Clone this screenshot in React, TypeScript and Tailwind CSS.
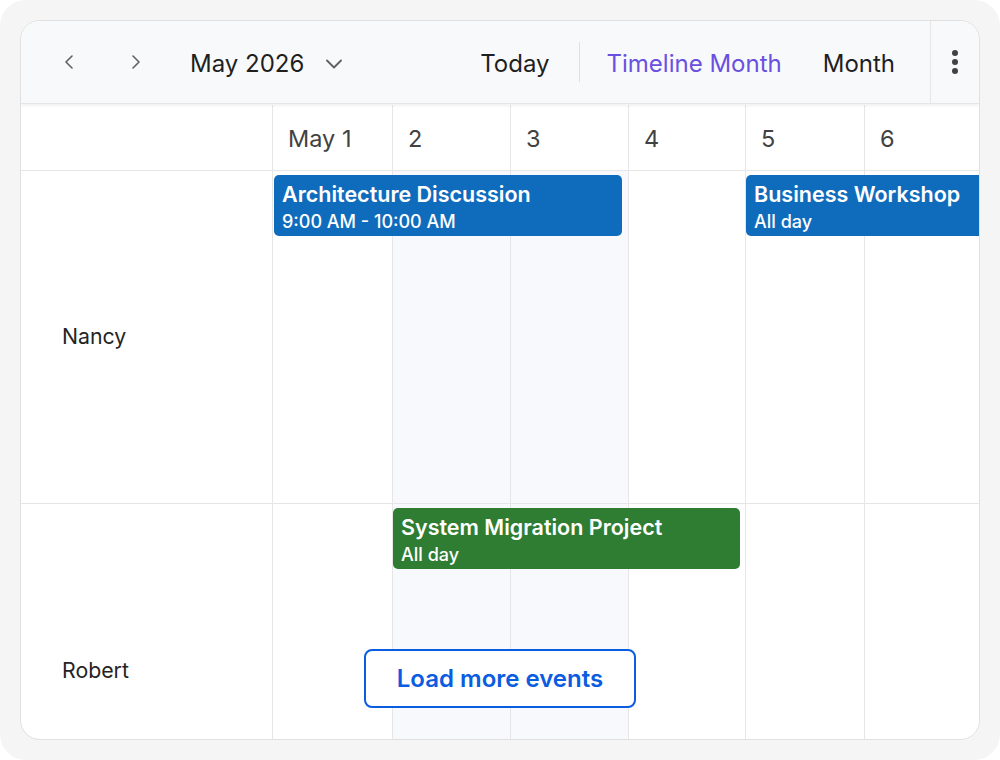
import { ChevronDown, ChevronLeft, ChevronRight } from "lucide-react";

const days = [
  { label: "May 1", width: "w-[120px]", weekend: false },
  { label: "2", width: "w-[118px]", weekend: true },
  { label: "3", width: "w-[118px]", weekend: true },
  { label: "4", width: "w-[117px]", weekend: false },
  { label: "5", width: "w-[119px]", weekend: false },
  { label: "6", width: "w-[118px]", weekend: false },
];

interface EventBlockProps {
  title: string;
  subtitle: string;
  className: string;
}

function EventBlock({ title, subtitle, className }: EventBlockProps) {
  return (
    <div
      className={`absolute top-[4px] h-[61px] rounded-[5px] px-2 pt-[6px] text-white ${className}`}
    >
      <p className="text-[21.5px] leading-[26px] font-semibold">{title}</p>
      <p className="mt-[4px] text-[18px] leading-[22px] font-medium">{subtitle}</p>
    </div>
  );
}

function DayCells() {
  return (
    <div className="flex h-full">
      {days.map((day) => (
        <div
          key={day.label}
          className={`h-full ${day.width} shrink-0 border-l border-[#e6e6e6] ${
            day.weekend ? "bg-[#f7f9fc]" : "bg-white"
          }`}
        />
      ))}
    </div>
  );
}

export default function App() {
  return (
    <div
      className="h-[760px] w-[1000px] bg-white"
      style={{ fontFamily: "Inter, 'Noto Sans', sans-serif" }}
    >
      <div className="h-full rounded-[26px] bg-[#f5f5f5] p-[20px]">
        <div className="relative flex h-full flex-col overflow-hidden rounded-[20px] border border-[#e0e0e0] bg-white">
          {/* toolbar */}
          <div className="z-10 flex h-[83px] shrink-0 items-center border-b border-[#e6e6e6] bg-[#f8f9fb] shadow-[0_2px_3px_rgba(0,0,0,0.06)]">
            <button className="ml-[30px] flex h-9 w-9 items-center justify-center text-[#616161]">
              <ChevronLeft className="h-6 w-6" strokeWidth={1.6} />
            </button>
            <button className="ml-[31px] flex h-9 w-9 items-center justify-center text-[#616161]">
              <ChevronRight className="h-6 w-6" strokeWidth={1.6} />
            </button>
            <div className="ml-[36px] flex items-center gap-[16px] pt-[3px]">
              <span className="text-[24px] text-[#1f1f1f]">May 2026</span>
              <ChevronDown className="h-7 w-7 text-[#616161]" strokeWidth={1.6} />
            </div>
            <div className="ml-auto flex h-full items-center">
              <span className="mr-[29px] pt-[3px] text-[24px] text-[#1f1f1f]">Today</span>
              <div className="h-[40px] w-px bg-[#e0e0e0]" />
              <span className="ml-[27px] pt-[3px] text-[24px] text-[#6950e0]">
                Timeline Month
              </span>
              <span className="ml-[41px] pt-[3px] text-[24px] text-[#1f1f1f]">Month</span>
              <div className="ml-[35px] h-full w-px bg-[#e6e6e6]" />
              <div className="flex h-full w-[48px] items-center justify-center">
                <svg width="10" height="26" viewBox="0 0 10 26" fill="#424242">
                  <circle cx="5" cy="4" r="3" />
                  <circle cx="5" cy="13" r="3" />
                  <circle cx="5" cy="22" r="3" />
                </svg>
              </div>
            </div>
          </div>

          {/* date header */}
          <div className="mt-[1px] flex h-[66px] shrink-0 border-b border-[#e6e6e6]">
            <div className="w-[251px] shrink-0" />
            {days.map((day) => (
              <div
                key={day.label}
                className={`flex ${day.width} shrink-0 items-center border-l border-[#e6e6e6] pt-[3px] pl-[15px] text-[23.5px] text-[#424242]`}
              >
                {day.label}
              </div>
            ))}
          </div>

          {/* Nancy */}
          <div className="flex h-[333px] shrink-0 border-b border-[#e6e6e6]">
            <div className="flex w-[251px] shrink-0 items-center pl-[41px] text-[21.3px] text-[#242424]">
              Nancy
            </div>
            <div className="relative flex-1">
              <DayCells />
              <EventBlock
                title="Architecture Discussion"
                subtitle="9:00 AM - 10:00 AM"
                className="left-[2px] w-[348px] bg-[#0f6cbd]"
              />
              <EventBlock
                title="Business Workshop"
                subtitle="All day"
                className="left-[474px] w-[240px] bg-[#0f6cbd]"
              />
            </div>
          </div>

          {/* Robert */}
          <div className="flex h-[333px] shrink-0">
            <div className="flex w-[251px] shrink-0 items-center pl-[41px] text-[21.3px] text-[#242424]">
              Robert
            </div>
            <div className="relative flex-1">
              <DayCells />
              <EventBlock
                title="System Migration Project"
                subtitle="All day"
                className="left-[121px] w-[347px] bg-[#2e7d32]"
              />
            </div>
          </div>

          <button className="absolute bottom-[31px] left-1/2 flex h-[59px] w-[272px] -translate-x-1/2 items-center justify-center rounded-[8px] border-2 border-[#0a5ce0] bg-white text-[24px] font-semibold text-[#0a5ce0]">
            Load more events
          </button>
        </div>
      </div>
    </div>
  );
}
